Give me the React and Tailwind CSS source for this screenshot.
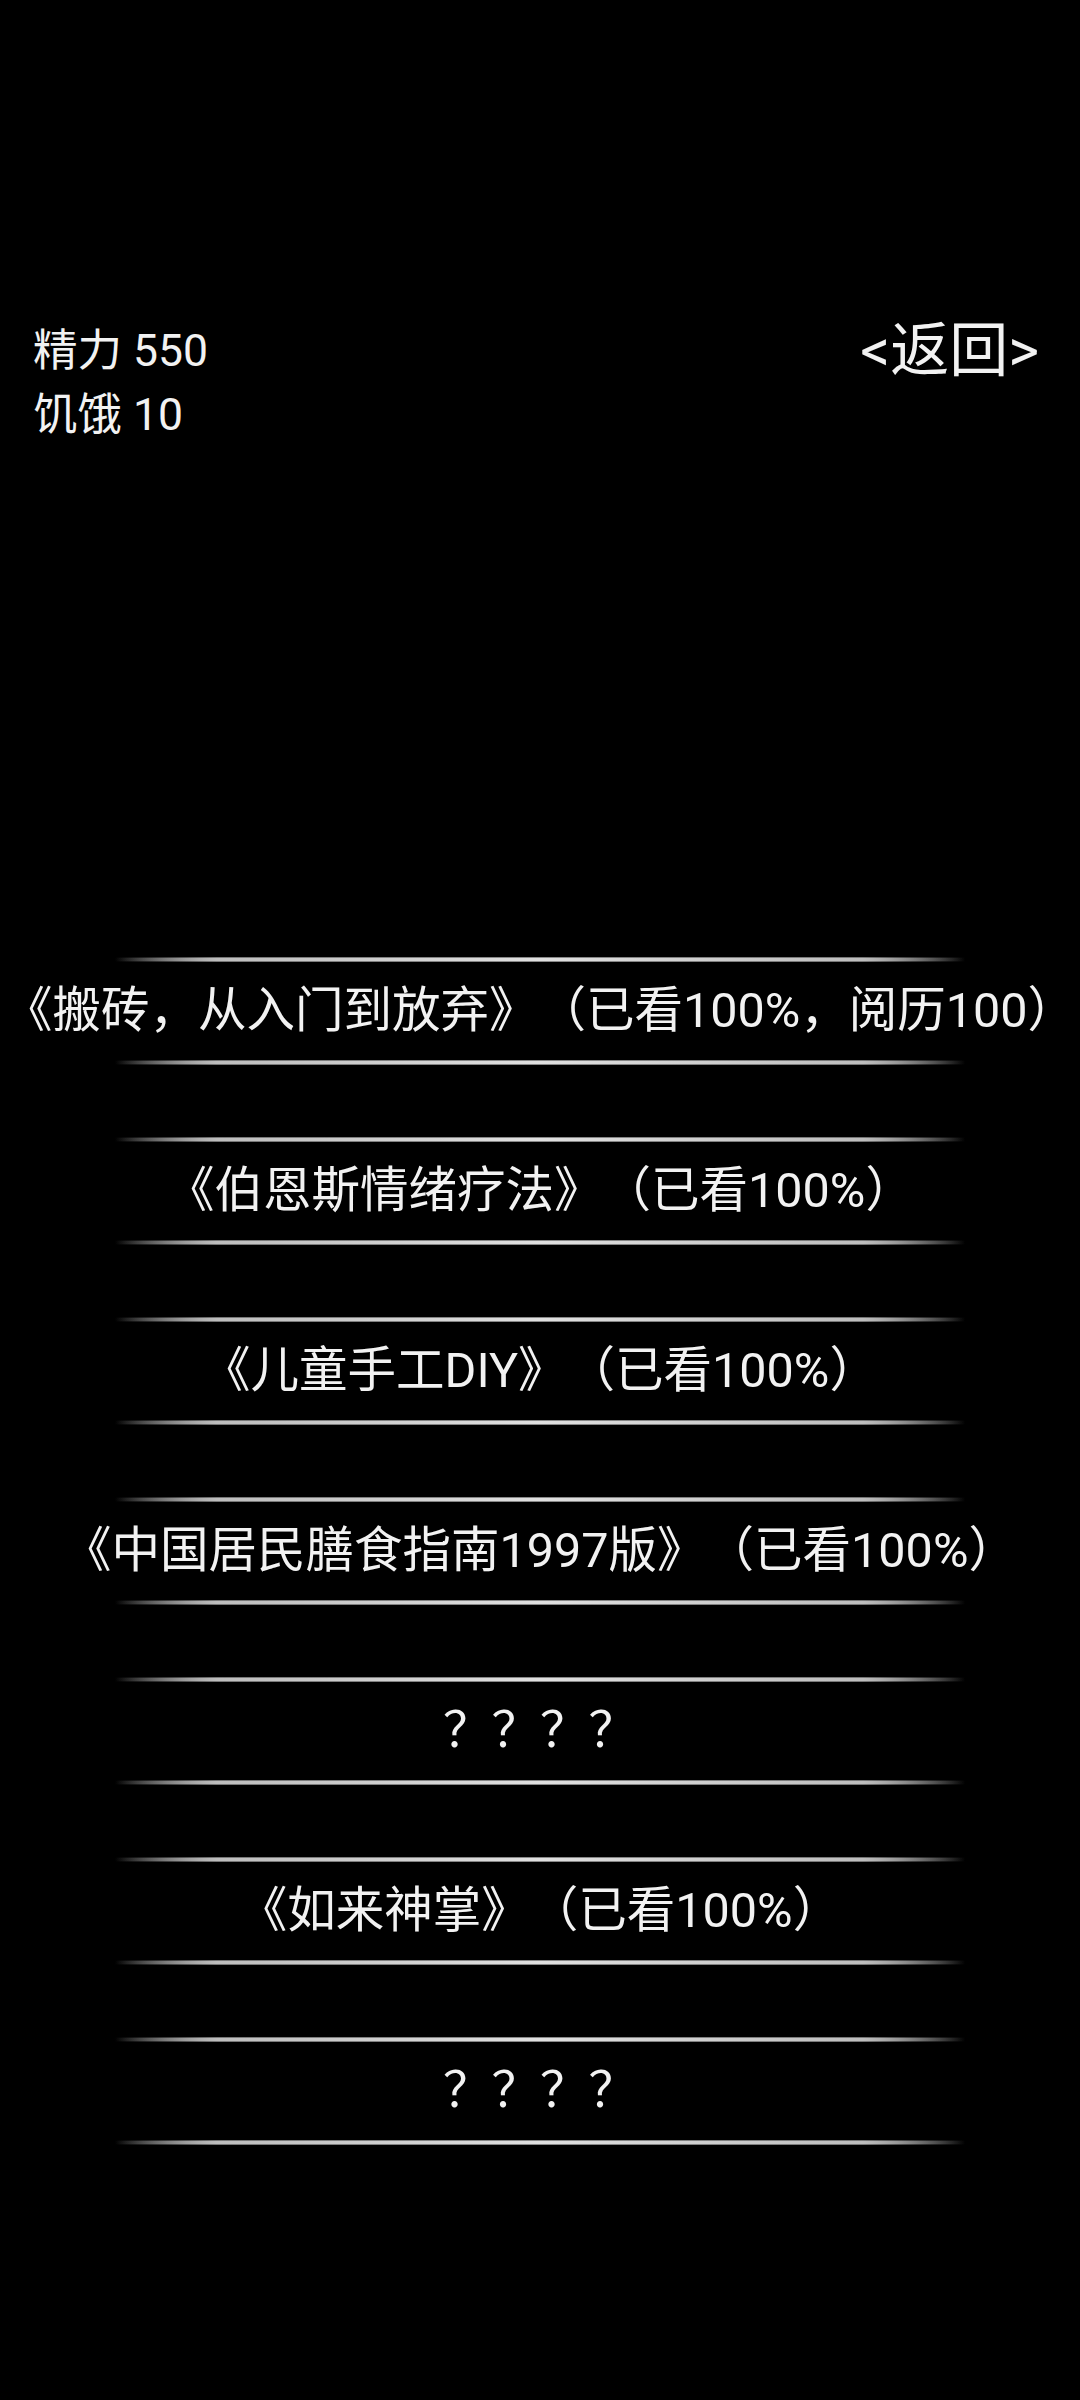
const font = { fontFamily: '"Roboto", "Noto Sans CJK SC", sans-serif' };

const books = [
  "《搬砖，从入门到放弃》（已看100%，阅历100）",
  "《伯恩斯情绪疗法》（已看100%）",
  "《儿童手工DIY》（已看100%）",
  "《中国居民膳食指南1997版》（已看100%）",
  "？？？？",
  "《如来神掌》（已看100%）",
  "？？？？",
];

function Divider() {
  return (
    <div className="mx-auto flex h-[5px] w-[850px] flex-col bg-[linear-gradient(to_right,transparent_0%,#777_12%,#8a8a8a_50%,#777_88%,transparent_100%)]">
      <div className="h-[1px]" />
      <div className="h-[3px] bg-[linear-gradient(to_right,transparent_0%,#bdbdbd_12%,#e0e0e0_50%,#bdbdbd_88%,transparent_100%)]" />
    </div>
  );
}

function BookRow({ title }) {
  return (
    <div className="flex h-[108px] flex-col">
      <Divider />
      <div className="flex flex-1 items-center justify-center whitespace-nowrap text-[48.5px] leading-none text-[#f2f2f2] [text-spacing-trim:space-all]">
        {title}
      </div>
      <Divider />
    </div>
  );
}

export default function App() {
  return (
    <div className="min-h-[2400px] w-[1080px] bg-black text-white" style={font}>
      <div className="flex items-start justify-between px-[33px] pt-[319px]">
        <div className="text-[44.5px] leading-[64px] text-[#f2f2f2]">
          <div>精力 550</div>
          <div>饥饿 10</div>
        </div>
        <div className="mr-[8px] text-[59px] leading-[64px] text-[#f2f2f2]">&lt;返回&gt;</div>
      </div>

      <div className="mt-[510px] flex flex-col gap-[72px]">
        {books.map((b, i) => (
          <BookRow key={i} title={b} />
        ))}
      </div>
    </div>
  );
}
